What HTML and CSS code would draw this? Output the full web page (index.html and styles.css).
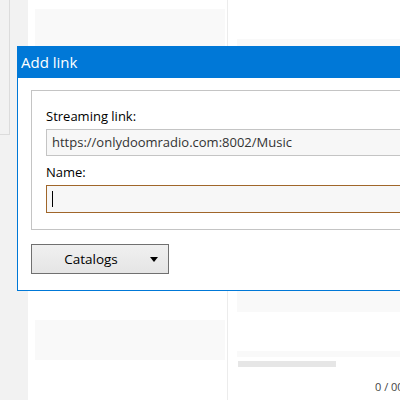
FILE: index.html
```html
<!DOCTYPE html>
<html>
<head>
<meta charset="utf-8">
<link rel="stylesheet" href="styles.css">
</head>
<body>
<div class="app">
  <div class="strip">
    <div class="side-panel"></div>
  </div>
  <div class="col1">
    <div class="card card-top"></div>
    <div class="card card-bottom"></div>
  </div>
  <div class="col2">
    <div class="card card-main"></div>
    <div class="stripe"></div>
    <div class="progress"></div>
    <div class="counter">0 / 00</div>
  </div>
</div>

<div class="dialog">
  <div class="titlebar">Add link</div>
  <div class="dialog-body">
    <div class="group">
      <label class="label">Streaming link:</label>
      <div class="input">https://onlydoomradio.com:8002/Music</div>
      <label class="label label-name">Name:</label>
      <div class="input input-focus"><span class="caret"></span></div>
    </div>
    <button class="catalogs">
      <span class="catalogs-text">Catalogs</span>
      <svg class="arrow" width="8" height="5" viewBox="0 0 8 5"><path d="M0 0H8L4 5Z" fill="#000"/></svg>
    </button>
  </div>
</div>
</body>
</html>
```
FILE: styles.css
```css
html, body {
  margin: 0;
  padding: 0;
  width: 400px;
  height: 400px;
  overflow: hidden;
  background: #ffffff;
  font-family: "Open Sans", "Noto Sans", sans-serif;
}

.app {
  display: flex;
  width: 400px;
  height: 400px;
}

.strip {
  width: 28px;
  flex: none;
  background: #f2f2f2;
}

.side-panel {
  width: 10px;
  height: 135px;
  box-sizing: border-box;
  border-right: 1px solid #dcdcdc;
  border-bottom: 1px solid #dcdcdc;
  background: #f2f2f2;
}

.col1 {
  width: 200px;
  flex: none;
  box-sizing: border-box;
  border-right: 1px solid #ececec;
  padding: 9px 2px 0 7px;
  display: flex;
  flex-direction: column;
}

.card {
  background: #f9f9f9;
}

.card-top {
  height: 120px;
}

.card-bottom {
  margin-top: 191px;
  height: 40px;
}

.col2 {
  flex: 1;
  padding: 39px 0 0 9px;
  display: flex;
  flex-direction: column;
}

.card-main {
  height: 273px;
}

.stripe {
  margin-top: 39px;
  height: 6px;
  background: #f9f9f9;
}

.progress {
  margin-top: 4px;
  width: 98px;
  height: 6px;
  margin-left: 1px;
  background: #e6e6e6;
}

.counter {
  margin-top: 12px;
  padding-left: 138px;
  font-size: 11px;
  color: #444;
  white-space: nowrap;
}

.dialog {
  position: absolute;
  left: 17px;
  top: 46px;
  width: 400px;
  height: 245px;
  box-sizing: border-box;
  border: 1px solid #0078d7;
  background: #ffffff;
}

.titlebar {
  height: 32px;
  margin: -1px -1px 0 -1px;
  background: #0078d7;
  color: #ffffff;
  font-size: 15px;
  line-height: 33px;
  padding-left: 4px;
}

.dialog-body {
  padding: 12px 0 0 13px;
}

.group {
  border: 1px solid #c4c4c4;
  border-right: none;
  height: 140px;
  box-sizing: border-box;
  padding: 16px 0 0 14px;
}

.label {
  display: block;
  font-size: 13px;
  color: #000;
  line-height: 18px;
  height: 18px;
}

.label-name {
  margin-top: 7px;
}

.input {
  margin-top: 4px;
  height: 27px;
  box-sizing: border-box;
  border: 1px solid #c4c4c4;
  border-right: none;
  background: #f7f7f7;
  font-size: 13px;
  color: #333;
  line-height: 25px;
  padding-left: 5px;
  white-space: nowrap;
}

.input-focus {
  height: 28px;
  border-color: #a0662a;
  display: flex;
  align-items: center;
}

.caret {
  width: 1px;
  height: 16px;
  background: #000;
}

.catalogs {
  margin-top: 14px;
  width: 138px;
  height: 30px;
  box-sizing: border-box;
  border: 1px solid #707070;
  background: linear-gradient(#f0f0f0, #e5e5e5);
  display: flex;
  align-items: center;
  padding: 0 10px 0 0;
  font-family: inherit;
  font-size: 13.5px;
  color: #000;
}

.catalogs-text {
  flex: 1;
  text-align: center;
  padding-left: 0;
}

.arrow {
  flex: none;
}
```
